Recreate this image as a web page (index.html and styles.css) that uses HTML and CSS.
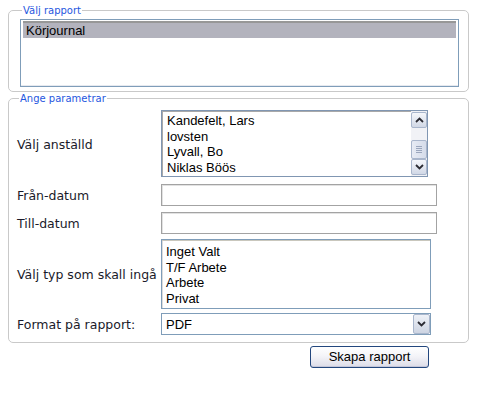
FILE: index.html
```html
<!DOCTYPE html>
<html lang="sv">
<head>
<meta charset="utf-8">
<title>Rapport</title>
<link rel="stylesheet" href="styles.css">
</head>
<body>
<fieldset class="panel panel-report">
  <legend class="panel-title">Välj rapport</legend>
  <div class="listbox report-list">
    <div class="option selected">Körjournal</div>
  </div>
</fieldset>

<fieldset class="panel panel-params">
  <legend class="panel-title">Ange parametrar</legend>

  <div class="row row-employee">
    <div class="label">Välj anställd</div>
    <div class="listbox employee-list">
      <div class="options">
        <div class="option">Kandefelt, Lars</div>
        <div class="option">lovsten</div>
        <div class="option">Lyvall, Bo</div>
        <div class="option">Niklas Böös</div>
      </div>
      <div class="scrollbar">
        <div class="sb-btn">
          <svg width="9" height="6" viewBox="0 0 9 6"><polyline points="1,5 4.5,1.5 8,5" fill="none" stroke="#2b2b33" stroke-width="1.8"/></svg>
        </div>
        <div class="sb-track">
          <div class="sb-thumb">
            <span class="grip"></span><span class="grip"></span><span class="grip"></span><span class="grip"></span>
          </div>
        </div>
        <div class="sb-btn">
          <svg width="9" height="6" viewBox="0 0 9 6"><polyline points="1,1 4.5,4.5 8,1" fill="none" stroke="#2b2b33" stroke-width="1.8"/></svg>
        </div>
      </div>
    </div>
  </div>

  <div class="row row-from">
    <div class="label">Från-datum</div>
    <div class="textbox"></div>
  </div>

  <div class="row row-to">
    <div class="label">Till-datum</div>
    <div class="textbox"></div>
  </div>

  <div class="row row-type">
    <div class="label">Välj typ som skall ingå</div>
    <div class="listbox type-list">
      <div class="option">Inget Valt</div>
      <div class="option">T/F Arbete</div>
      <div class="option">Arbete</div>
      <div class="option">Privat</div>
    </div>
  </div>

  <div class="row row-format">
    <div class="label">Format på rapport:</div>
    <div class="select">
      <span class="select-value">PDF</span>
      <span class="select-btn">
        <svg width="9" height="6" viewBox="0 0 9 6"><polyline points="1,1 4.5,4.5 8,1" fill="none" stroke="#2b2b33" stroke-width="1.8"/></svg>
      </span>
    </div>
  </div>
</fieldset>

<div class="actions">
  <button class="btn" type="button">Skapa rapport</button>
</div>
</body>
</html>
```

FILE: styles.css
```css
html, body {
  background: #ffffff;
}

body {
  margin: 5px 8px 8px 8px;
  font-family: "DejaVu Sans", Verdana, sans-serif;
  color: #1a1a2a;
}

.panel {
  box-sizing: border-box;
  width: 461px;
  margin: 0;
  border: 1px solid #c9c9c9;
  border-radius: 5px;
  min-width: 0;
}

.panel-title {
  margin-left: 2px;
  padding: 0 1px;
  font-family: "DejaVu Sans", Verdana, sans-serif;
  font-size: 10px;
  line-height: 11px;
  color: #1f57e0;
}

.panel-report {
  padding: 3px 9px 4px 11px;
}

.panel-params {
  margin-top: 1px;
  padding: 6px 9px 7px 8px;
}

.listbox {
  box-sizing: border-box;
  border: 1px solid #7f9db9;
  background: #ffffff;
  font-family: "Liberation Sans", Arial, sans-serif;
  font-size: 13px;
  color: #000000;
}

.option {
  line-height: 15.5px;
  padding-left: 3px;
  white-space: nowrap;
}

.report-list {
  height: 68px;
  padding: 1px 2px;
  box-shadow: inset 0 -1px 0 #e6e9ef;
}

.report-list .option {
  line-height: 15px;
  padding: 0 3px;
}

.option.selected {
  background: #b3b3bd;
  border-top: 2px solid #979797;
}

.row {
  display: flex;
  align-items: center;
}

.label {
  width: 144px;
  flex: none;
  font-size: 12.5px;
  line-height: 16px;
  white-space: nowrap;
  padding-top: 2px;
}

.row-employee { margin-bottom: 7px; }
.row-from { margin-bottom: 6px; }
.row-to { margin-bottom: 5px; }
.row-type { margin-bottom: 4px; }

.employee-list {
  width: 267px;
  height: 67px;
  display: flex;
  border-color: #8096b2;
  box-shadow: inset 1px 1px 0 #a9a9a9;
}

.employee-list .options {
  flex: 1;
  padding-top: 2px;
  padding-left: 2px;
}

.scrollbar {
  width: 16px;
  display: flex;
  flex-direction: column;
  background: #f1f2f6;
  padding: 1px 0;
}

.sb-btn {
  box-sizing: border-box;
  height: 16px;
  border: 1px solid #a9b6cc;
  border-radius: 2px;
  background: linear-gradient(to bottom, #f5f7fb, #d1d8e6);
  display: flex;
  align-items: center;
  justify-content: center;
}

.sb-track {
  flex: 1;
  display: flex;
  flex-direction: column;
  justify-content: flex-end;
}

.sb-thumb {
  box-sizing: border-box;
  height: 19px;
  border: 1px solid #a9b6cc;
  border-radius: 2px;
  background: linear-gradient(to right, #e7ebf4, #d5dcea);
  display: flex;
  flex-direction: column;
  align-items: center;
  justify-content: center;
  gap: 1px;
}

.grip {
  display: block;
  width: 6px;
  height: 1px;
  background: #9aa6bd;
}

.textbox {
  box-sizing: border-box;
  width: 276px;
  height: 22px;
  border: 1px solid #a3a3a3;
  box-shadow: inset 1px 1px 0 #e2e2e2;
  background: #ffffff;
}

.type-list {
  width: 270px;
  height: 70px;
  padding-top: 4px;
  padding-left: 1px;
  border-color: #7f9db9;
  box-shadow: inset 0 1px 0 #c9c7bd, inset 1px 0 0 #dcdcdc;
}

.type-list .option {
  padding-left: 3px;
}

.select {
  box-sizing: border-box;
  width: 270px;
  height: 22px;
  border: 1px solid #7f9db9;
  background: #ffffff;
  display: flex;
  align-items: center;
  font-family: "Liberation Sans", Arial, sans-serif;
  font-size: 13px;
  color: #000000;
}

.select-value {
  flex: 1;
  padding-left: 4px;
}

.select-btn {
  box-sizing: border-box;
  width: 17px;
  height: 20px;
  border: 1px solid #a9b6cc;
  border-radius: 2px;
  background: linear-gradient(to bottom, #eef1f7, #cdd4e2);
  display: flex;
  align-items: center;
  justify-content: center;
}

.actions {
  display: flex;
  padding-left: 302px;
  margin-top: 3px;
}

.btn {
  box-sizing: border-box;
  width: 119px;
  height: 22px;
  margin: 0;
  padding: 0;
  border: 1px solid #23477e;
  border-radius: 3px;
  background: linear-gradient(to bottom, #ffffff 0%, #f4f4f8 45%, #dcdce8 100%);
  box-shadow: inset 0 -1px 0 #c4c6d8;
  font-family: "Liberation Sans", Arial, sans-serif;
  font-size: 13px;
  color: #000000;
  line-height: 20px;
}
```
